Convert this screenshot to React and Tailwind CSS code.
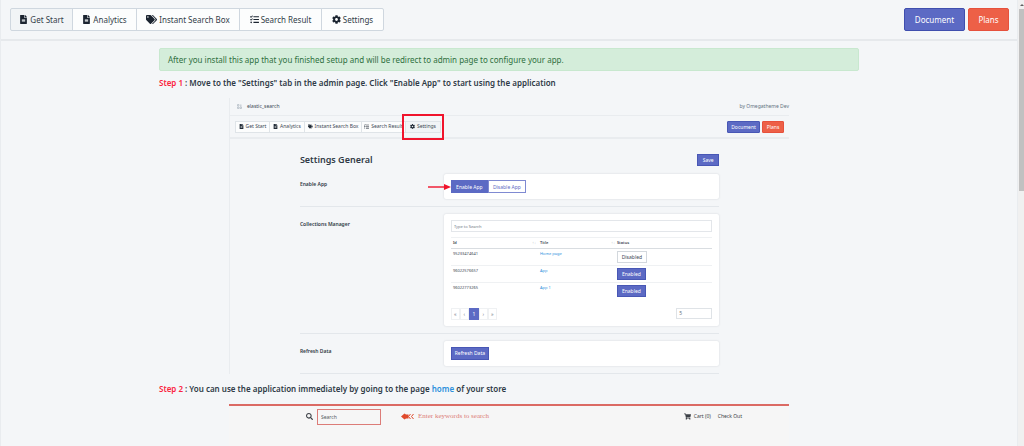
import React, { useState } from "react";
import { FaCog, FaFileAlt, FaSearch, FaShoppingCart, FaTags, FaTasks } from "react-icons/fa";

const tabs = [
  { label: "Get Start", icon: FaFileAlt, size: "w-[63px]", smallSize: "w-[35px]" },
  { label: "Analytics", icon: FaFileAlt, size: "w-[65px]", smallSize: "w-[36px]" },
  { label: "Instant Search Box", icon: FaTags, size: "w-[104px]", smallSize: "w-[58px]" },
  { label: "Search Result", icon: FaTasks, size: "w-[83px]", smallSize: "w-[45px]" },
  { label: "Settings", icon: FaCog, size: "w-[63px]", smallSize: "w-[36px]" },
];

const collections = [
  { id: "95233474641", title: "Home page", enabled: false },
  { id: "96022576657", title: "App", enabled: true },
  { id: "96022773265", title: "App 1", enabled: true },
];

function TopBar() {
  const [active, setActive] = useState("Get Start");

  return (
    <header className="flex items-center justify-between border-b-2 border-[#e6e9ec] py-2 pr-2 pl-[9px]">
      <nav className="flex">
        {tabs.map(({ label, icon: Icon, size }) => (
          <button
            key={label}
            type="button"
            onClick={() => setActive(label)}
            className={`${size} -mr-px flex h-[23px] items-center justify-center gap-[2px] border border-[#cfd7df] text-[8px] whitespace-nowrap text-[#333d49] first:rounded-l-xs last:rounded-r-xs ${
              active === label ? "bg-[#f1f4f6]" : "bg-[#fcfdfd]"
            }`}
          >
            <Icon className={label === "Instant Search Box" ? "size-[11px] text-[#1b2430]" : "size-[9px] text-[#1b2430]"} />
            {label}
          </button>
        ))}
      </nav>
      <div className="flex gap-[3px]">
        <button type="button" className="h-[23px] w-[61px] rounded-xs border border-[#3f4eae] bg-[#5c6ac4] text-[8px] text-white">
          Document
        </button>
        <button type="button" className="h-[23px] w-[41px] rounded-xs border border-[#e6513c] bg-[#ed6047] text-[8px] text-white">
          Plans
        </button>
      </div>
    </header>
  );
}

function SettingsRow({ label, children }) {
  return (
    <section className="flex border-b border-[#e3e7eb] py-[7px]">
      <h3 className="w-[144px] shrink-0 pt-[6px] text-[5px] leading-[8px] font-semibold text-[#2f3a46]">{label}</h3>
      <div className="flex-1 rounded-xs bg-white px-[7px] py-[6px] shadow-[0_0_2px_rgba(60,70,90,0.2)]">{children}</div>
    </section>
  );
}

function CollectionsTable() {
  return (
    <>
      <input
        type="text"
        aria-label="Search collections"
        placeholder="Type to Search"
        className="block h-3 w-full border border-[#e3e6ea] px-[2px] text-[4px] placeholder:text-[#6b7480]"
      />
      <table className="mt-[5px] w-full table-fixed text-left text-[4px] leading-[6px] text-[#3d4855]">
        <thead>
          <tr className="h-[11px] border-t border-b border-t-[#eff1f3] border-b-[#d9dde1]">
            <th className="w-[87px] pl-[2px] font-semibold">
              <span className="flex justify-between">
                Id <span className="pr-[2px] font-normal text-[#b8bec5]">↑↓</span>
              </span>
            </th>
            <th className="w-[79px] pl-[2px] font-semibold">
              <span className="flex justify-between">
                Title <span className="pr-[2px] font-normal text-[#b8bec5]">↑↓</span>
              </span>
            </th>
            <th className="font-semibold">Status</th>
          </tr>
        </thead>
        <tbody>
          {collections.map((item) => (
            <tr key={item.id} className="h-[17px] border-b border-[#eff1f3] align-top last:border-0">
              <td className="pt-[2px] pl-[2px]">{item.id}</td>
              <td className="pt-[2px] pl-[2px]">
                <a href="#" className="text-[#2b8fdc]">{item.title}</a>
              </td>
              <td className="pt-[2px]">
                <button
                  type="button"
                  className={
                    item.enabled
                      ? "block h-3 w-[29px] border border-[#4857b5] bg-[#5c6ac4] text-[5px] leading-[6px] text-white"
                      : "block h-3 w-[30px] border border-[#d3d8dd] bg-white text-[5px] leading-[6px] text-[#3d4855]"
                  }
                >
                  {item.enabled ? "Enabled" : "Disabled"}
                </button>
              </td>
            </tr>
          ))}
        </tbody>
      </table>
      <div className="mt-2 flex justify-between">
        <div className="flex">
          {["«", "‹", "1", "›", "»"].map((page) => (
            <button
              key={page}
              type="button"
              className={
                page === "1"
                  ? "h-3 w-[10px] bg-[#5c6ac4] text-[5px] leading-[6px] text-white"
                  : "h-3 w-[9px] border border-[#eff1f3] text-[5px] leading-[6px] text-[#6b7480]"
              }
            >
              {page}
            </button>
          ))}
        </div>
        <input
          type="text"
          aria-label="Rows per page"
          defaultValue="5"
          className="h-[11px] w-9 border border-[#dfe3e7] px-[2px] text-[5px] text-[#6b7480]"
        />
      </div>
    </>
  );
}

function SettingsPreview() {
  return (
    <div className="mx-auto mt-[3px] w-4/5 border-l border-[#e9ecef] text-[#3d4855]">
      <div className="flex h-[18px] items-center justify-between border-b border-[#e9ecef] pl-[7px] text-[5px]">
        <span className="flex items-center gap-[5px]">
          <svg viewBox="0 0 10 10" className="size-[5px]" fill="none" stroke="#98a4b0">
            <path d="M1 1h3v3H1zM1 6h3v3H1zM6 6h3v3H6zM6 2h3M6 4h3" />
          </svg>
          elastic_search
        </span>
        <span className="text-[#637381]">by Omegatheme Dev</span>
      </div>

      <div className="flex h-[23px] items-center justify-between border-b-2 border-[#e9ecef] px-[5px]">
        <nav className="flex">
          {tabs.map(({ label, icon: Icon, smallSize }) => (
            <div key={label} className="relative -mr-px">
              <button
                type="button"
                className={`${smallSize} flex h-3 items-center justify-center gap-[2px] border border-[#dfe4e8] text-[5px] whitespace-nowrap ${
                  label === "Settings" ? "bg-[#f1f4f6]" : "bg-[#fcfdfd]"
                }`}
              >
                <Icon className="size-[5px] shrink-0 text-[#212b36]" />
                {label}
              </button>
              {label === "Settings" && (
                <span className="absolute -inset-x-[3px] -inset-y-[7px] border-2 border-[#f0142c]" />
              )}
            </div>
          ))}
        </nav>
        <div className="flex gap-[2px]">
          <button type="button" className="h-3 w-[33px] rounded-[1px] border border-[#4857b5] bg-[#5c6ac4] text-[5px] leading-[6px] text-white">
            Document
          </button>
          <button type="button" className="h-3 w-[22px] rounded-[1px] border border-[#e6513c] bg-[#ed6047] text-[5px] leading-[6px] text-white">
            Plans
          </button>
        </div>
      </div>

      <div className="mx-auto w-3/4 pt-[14px]">
        <div className="flex h-[14px] items-center justify-between">
          <h2 className="text-[9px] font-semibold text-[#2f3a46]">Settings General</h2>
          <button type="button" className="h-3 w-[22px] border border-[#4857b5] bg-[#5c6ac4] text-[5px] leading-[6px] text-white">
            Save
          </button>
        </div>
        <SettingsRow label="Enable App">
          <div className="relative flex h-[13px]">
            <button type="button" className="w-[37px] bg-[#5c6ac4] text-[5px] leading-[6px] text-white">
              Enable App
            </button>
            <button type="button" className="w-[38px] border border-[#7f8ad2] text-[5px] leading-[6px] text-[#5c6ac4]">
              Disable App
            </button>
            <svg viewBox="0 0 23 6" className="absolute top-[4px] right-full h-[6px] w-[23px]">
              <path d="M0 3h17" stroke="#f0142c" strokeWidth="1.4" />
              <path d="M16 0l7 3-7 3z" fill="#f0142c" />
            </svg>
          </div>
        </SettingsRow>
        <SettingsRow label="Collections Manager">
          <CollectionsTable />
        </SettingsRow>
        <SettingsRow label="Refresh Data">
          <button type="button" className="block h-[13px] w-[38px] border border-[#4857b5] bg-[#5c6ac4] text-[5px] leading-[6px] text-white">
            Refresh Data
          </button>
        </SettingsRow>
      </div>
    </div>
  );
}

function StorePreview() {
  return (
    <div className="mx-auto h-[200px] w-4/5 border-t-2 border-[#db6a64] bg-[#f6f6f6] text-[#3b3f45]">
      <div className="flex items-center pt-[3px] pr-[47px] pl-[77px] text-[5px]">
        <label htmlFor="store-search" aria-label="Search the store">
          <FaSearch className="size-[7px]" />
        </label>
        <input
          id="store-search"
          type="text"
          placeholder="Search"
          className="ml-1 h-4 w-16 border border-[#dc7c78] px-[3px] text-[5px] placeholder:text-[#55595f]"
        />
        <svg viewBox="0 0 26 14" className="ml-5 h-[7px] w-[13px]">
          <path d="M0 7l7-6 3 2h5v8h-5l-3 2z" fill="#e04a2c" />
          <path d="M19 2l-4 5 4 5M25 2l-4 5 4 5" fill="none" stroke="#e04a2c" strokeWidth="2" />
        </svg>
        <span className="ml-1 font-['Liberation_Serif',serif] text-[7px] text-[#dc7c76]">
          Enter keywords to search
        </span>
        <a href="#" className="ml-auto flex items-center gap-[3px]">
          <FaShoppingCart className="size-[7px]" />
          Cart (0)
        </a>
        <a href="#" className="ml-[7px]">Check Out</a>
      </div>
    </div>
  );
}

export default function App() {
  return (
    <div className="flex h-screen overflow-hidden bg-[#f4f6f8] font-['Noto_Sans','Open_Sans',sans-serif]">
      <div className="min-w-0 flex-1 border-x border-[#e9ecef]">
        <TopBar />
        <main className="mx-auto max-w-[700px] pt-[7px]">
          <p className="flex h-[23px] items-center rounded-xs border border-[#c8e8cf] bg-[#d4edda] px-2 text-[8px] text-[#2f7040]">
            After you install this app that you finished setup and will be redirect to admin page to configure your app.
          </p>
          <h2 className="flex h-6 items-center text-[8px] font-semibold whitespace-pre text-[#2f3a46]">
            <span className="text-[#fb2440]">Step 1</span> : Move to the "Settings" tab in the admin page. Click "Enable App" to start using the application
          </h2>
          <SettingsPreview />
          <h2 className="flex h-[30px] items-center text-[8px] font-semibold whitespace-pre text-[#2f3a46]">
            <span className="text-[#fb2440]">Step 2</span> : You can use the application immediately by going to the page <a href="#" className="text-[#2b8fdc]">home</a> of your store
          </h2>
          <StorePreview />
        </main>
      </div>

      {/* Scrollbar */}
      <div className="flex w-[6px] flex-col bg-[#f0f0f0] pl-px">
        <svg viewBox="0 0 5 9" className="h-[9px] w-[5px]">
          <path d="M1 6l2-2 2 2z" fill="#606060" />
        </svg>
        <div className="h-[182px] bg-[#c1c1c1]" />
      </div>
    </div>
  );
}
